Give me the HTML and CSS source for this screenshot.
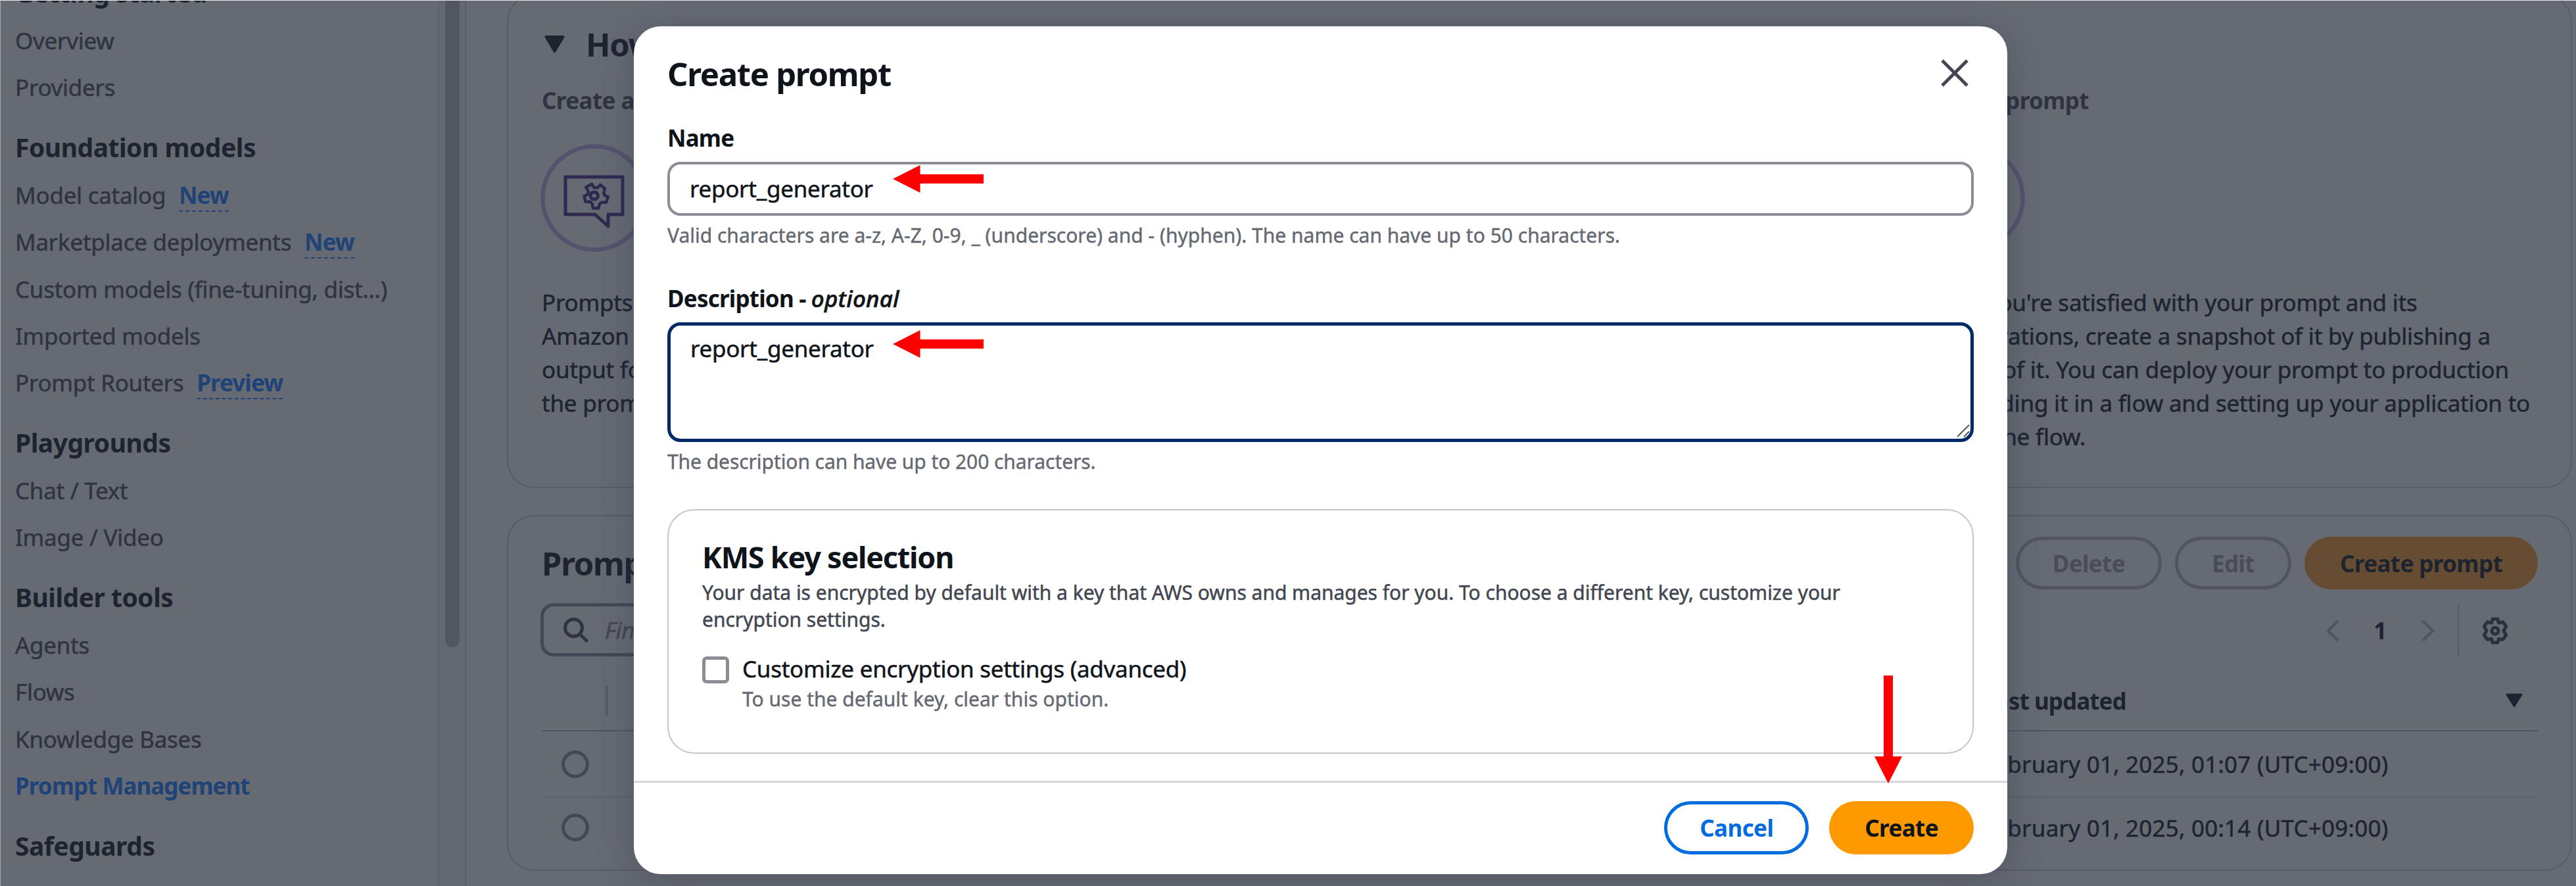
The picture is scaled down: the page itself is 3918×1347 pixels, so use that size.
FILE: index.html
```html
<!DOCTYPE html>
<html lang="en">
<head>
<meta charset="utf-8">
<title>Prompt Management</title>
<link rel="stylesheet" href="styles.css">
</head>
<body>
<div class="app">
  <nav class="sidebar">
    <section class="nav-group">
      <h3>Getting started</h3>
      <ul><li>Overview</li><li>Providers</li></ul>
    </section>
    <section class="nav-group">
      <h3>Foundation models</h3>
      <ul>
        <li>Model catalog <b class="tag">New</b></li>
        <li>Marketplace deployments <b class="tag">New</b></li>
        <li>Custom models (fine-tuning, dist...)</li>
        <li>Imported models</li>
        <li>Prompt Routers <b class="tag">Preview</b></li>
      </ul>
    </section>
    <section class="nav-group">
      <h3>Playgrounds</h3>
      <ul><li>Chat / Text</li><li>Image / Video</li></ul>
    </section>
    <section class="nav-group">
      <h3>Builder tools</h3>
      <ul>
        <li>Agents</li><li>Flows</li><li>Knowledge Bases</li>
        <li class="active">Prompt Management</li>
      </ul>
    </section>
    <section class="nav-group">
      <h3>Safeguards</h3>
    </section>
  </nav>
  <div class="scrollbar"><div class="thumb"></div></div>

  <main class="main">
    <section class="panel how">
      <h2 class="how-title">
        <svg width="31" height="26" viewBox="0 0 31 26"><path d="M2.500 2h26L15.500 24z" fill="#1d2430" stroke="#1d2430" stroke-width="4" stroke-linejoin="round"/></svg>
        How it works
      </h2>
      <div class="steps">
        <article class="step">
          <h4>Create a prompt</h4>
          <svg class="step-icon" width="164" height="164" viewBox="0 0 164 164" fill="none">
            <circle cx="82" cy="82" r="78.500" stroke="#55526e" stroke-width="6.500"/>
            <g stroke="#2f2850" stroke-width="5" stroke-linejoin="round">
              <path d="M38 50h87v57h-22v18l-20-18H38z"/>
              <path stroke-width="4.500" d="M78.200 60.800l3.300 5.400 5 .4 4.500-4.600 7 5.800-1.800 6.500 1.900 4 4.700 2.100-2.800 8.400-6.600-.4-3.600 2.800-1.200 6.400-8.800-.2-.9-6.400-3.200-3.300-7.200.1-2-8.700 5.400-2.400 1-4.600-3.700-6.400z"/>
              <circle cx="81.800" cy="78.500" r="5.600"/>
            </g>
          </svg>
          <p>Prompts<br>Amazon<br>output for<br>the prompt</p>
        </article>
        <article class="step"></article>
        <article class="step">
          <h4>Publish prompt</h4>
          <svg class="step-icon" width="164" height="164" viewBox="0 0 164 164" fill="none">
            <circle cx="82" cy="82" r="78.500" stroke="#55526e" stroke-width="6.500"/>
          </svg>
          <p>When you're satisfied with your prompt and its<br>configurations, create a snapshot of it by publishing a<br>version of it. You can deploy your prompt to production<br>by including it in a flow and setting up your application to<br>invoke the flow.</p>
        </article>
      </div>
    </section>

    <section class="panel prompts">
      <header class="bar">
        <h2>Prompts</h2>
        <div class="actions">
          <span class="btn ghost">Delete</span>
          <span class="btn ghost">Edit</span>
          <span class="btn dim">Create prompt</span>
        </div>
      </header>
      <div class="tools">
        <div class="search">
          <svg width="40" height="40" viewBox="0 0 40 40" fill="none" stroke="#2f3440" stroke-width="5"><circle cx="16.500" cy="16.500" r="13"/><path d="M26 26l11.500 11.500"/></svg>
          <em>Find prompts</em>
        </div>
        <div class="pager">
          <svg width="22" height="34" viewBox="0 0 22 34" fill="none" stroke="#505562" stroke-width="4.500"><path d="M19 2L4 17l15 15"/></svg>
          <b>1</b>
          <svg width="22" height="34" viewBox="0 0 22 34" fill="none" stroke="#505562" stroke-width="4.500"><path d="M3 2l15 15L3 32"/></svg>
          <i class="rule"></i>
          <svg width="42" height="42" viewBox="0 0 42 42" fill="none" stroke="#2b303c" stroke-width="5" stroke-linejoin="round"><path d="M17.200 3h7.600l1.600 6 6.300-1.400 5 6.600-3.700 6.800 3.700 6.600-5 6.600-6.300-1-1.600 5.800h-7.600l-1.600-5.800-6.300 1-5-6.600L8 21l-3.700-6.800 5-6.600L15.600 9z"/><circle cx="21" cy="21" r="5"/></svg>
        </div>
      </div>
      <div class="row head">
        <i class="split"></i>
        <strong>Last updated</strong>
        <svg class="sort" width="28" height="22" viewBox="0 0 28 22"><path d="M3 2h22L14 19.500z" fill="#1d2430" stroke="#1d2430" stroke-width="3" stroke-linejoin="round"/></svg>
      </div>
      <div class="row"><i class="radio"></i><span>February 01, 2025, 01:07 (UTC+09:00)</span></div>
      <div class="row last"><i class="radio"></i><span>February 01, 2025, 00:14 (UTC+09:00)</span></div>
    </section>
  </main>
</div>

<div class="modal">
  <header class="modal-head">
    <h2>Create prompt</h2>
    <svg width="44" height="44" viewBox="0 0 44 44" fill="none" stroke="#424650" stroke-width="5"><path d="M3 3l38 38M41 3L3 41"/></svg>
  </header>
  <div class="modal-body">
    <div class="field">
      <label>Name</label>
      <div class="input">report_generator</div>
      <p class="hint">Valid characters are a-z, A-Z, 0-9, _ (underscore) and - (hyphen). The name can have up to 50 characters.</p>
    </div>
    <div class="field tall">
      <label>Description - <em>optional</em></label>
      <div class="input area">report_generator
        <svg class="grip" width="22" height="22" viewBox="0 0 22 22" fill="none" stroke="#555" stroke-width="2"><path d="M2 19L20 1M12 19l8-8"/></svg>
      </div>
      <p class="hint">The description can have up to 200 characters.</p>
    </div>
    <div class="kms">
      <h3>KMS key selection</h3>
      <p class="kms-desc">Your data is encrypted by default with a key that AWS owns and manages for you. To choose a different key, customize your<br>encryption settings.</p>
      <div class="check">
        <i class="box"></i>
        <div>
          <div>Customize encryption settings (advanced)</div>
          <p class="hint">To use the default key, clear this option.</p>
        </div>
      </div>
    </div>
  </div>
  <footer class="modal-foot">
    <span class="btn cancel">Cancel</span>
    <span class="btn create">Create</span>
  </footer>
</div>

<svg class="arrow arrow-name" width="138" height="42" viewBox="0 0 138 42"><path d="M0 21L41.500 0v14H138v14H41.500v14z" fill="#f00"/></svg>
<svg class="arrow arrow-desc" width="138" height="42" viewBox="0 0 138 42"><path d="M0 21L41.500 0v14H138v14H41.500v14z" fill="#f00"/></svg>
<svg class="arrow arrow-create" width="42" height="164" viewBox="0 0 42 164"><path d="M14 0h14v123h14L21 164 0 123h14z" fill="#f00"/></svg>
</body>
</html>
```
FILE: styles.css
```css
* { box-sizing: border-box; margin: 0; padding: 0; }
html, body { width: 3918px; height: 1347px; overflow: hidden; }
body {
  position: relative;
  background: #666a73;
  color: #1d2430;
  font: 35px/51px "Noto Sans", "Open Sans", sans-serif;
  letter-spacing: -0.27px;
  white-space: nowrap;
  -webkit-text-stroke: 0.5px currentColor;
}
ul { list-style: none; }
svg { display: block; flex: none; }
h2, h3, h4, b, strong { font-weight: 700; }
h2, h3, h4, b, strong, label, .btn, .active { -webkit-text-stroke: 0; }
i { display: block; flex: none; }

/* Page behind the dialog */
.app {
  display: flex;
  height: 1347px;
  border-top: 1px solid #e8e9ea;
  border-left: 1px solid #a3a6ab;
  overflow: hidden;
}
.sidebar {
  flex: none;
  width: 665px;
  padding-left: 22px;
  margin-top: -38px;
  color: #2f3440;
}
.nav-group { margin-bottom: 40px; }
.nav-group h3 {
  font-size: 39px;
  letter-spacing: -0.5px;
  margin-bottom: 22px;
  color: #1d2430;
}
.nav-group li + li { margin-top: 20.2px; }
.tag, .active { color: #1f4377; font-weight: 700; letter-spacing: -0.95px; }
.tag {
  display: inline-block;
  height: 51px;
  margin-left: 11px;
  border-bottom: 2.500px dashed #1f4377;
}
.scrollbar {
  flex: none;
  width: 43px;
  background: #646872;
  border-left: 2px solid #5f636e;
  border-right: 2px solid #575c68;
  padding-left: 9px;
}
.thumb {
  width: 22px;
  height: 983px;
  background: #525661;
  border-radius: 0 0 11px 11px;
}
.main {
  margin-left: 62px;
  width: 3141px;
  display: flex;
  flex-direction: column;
  gap: 41px;
}
.panel {
  flex: none;
  border: 2px solid #575c68;
  border-radius: 41px;
  padding: 0 50px 0 51px;
}
.how { height: 750px; margin-top: -9px; padding-top: 41px; }
h2 { font-size: 49px; line-height: 64px; letter-spacing: -1.3px; }
.how-title { display: flex; align-items: center; gap: 32px; padding-left: 4px; }
.steps {
  display: grid;
  grid-template-columns: 1047px 1047px 1fr;
  margin-top: 28px;
}
.step h4 { font-size: 35px; letter-spacing: -0.6px; color: #2f3440; }
.step-icon { margin: 41px 0 51px -2px; }
.step p { letter-spacing: -0.2px; }

.prompts { height: 541px; padding-top: 31px; }
.bar { display: flex; justify-content: space-between; height: 80px; }
.bar h2 { margin-top: 8px; }
.actions { display: flex; gap: 20px; }
.btn {
  display: flex;
  align-items: center;
  justify-content: center;
  height: 80px;
  padding: 0 49px;
  border: 5px solid transparent;
  border-radius: 41px;
  font-weight: 700;
  letter-spacing: -0.6px;
}
.ghost { padding: 0 51px; color: #484d59; border-color: #505562; }
.dim { background: #664c33; }
.tools { display: flex; justify-content: space-between; margin-top: 21px; }
.search {
  display: flex;
  align-items: center;
  gap: 24px;
  width: 900px;
  height: 81px;
  margin-left: -2px;
  padding-left: 29px;
  border: 5px solid #434854;
  border-radius: 20px;
  color: #434854;
}
.pager { display: flex; align-items: center; height: 83px; padding-right: 44px; }
.pager b { margin: 0 52px 0 51px; }
.pager .rule { width: 2px; height: 80px; background: #575c68; margin: 0 34px; }
.row { display: flex; align-items: center; height: 101px; border-bottom: 2px solid #5d616c; padding-left: 30px; }
.row span { margin-left: 2119px; letter-spacing: 0.23px; }
.head { height: 112px; padding: 20px 22px 0 97px; border-color: #505562; }
.head strong { margin-left: 2091px; letter-spacing: -0.9px; }
.sort { margin-left: auto; }
.split { width: 4px; height: 46px; background: #575c68; }
.last { border: 0; height: 90px; }
.radio { width: 42px; height: 42px; border: 5px solid #434854; border-radius: 50%; }

/* Dialog */
.modal {
  position: absolute;
  left: 964px;
  top: 40px;
  width: 2089px;
  height: 1289px;
  display: flex;
  flex-direction: column;
  background: #fff;
  border-radius: 41px;
  color: #0f141a;
  box-shadow: 0 10px 51px 5px rgba(40, 46, 66, 0.28);
}
.modal-head {
  display: flex;
  justify-content: space-between;
  padding: 40px 58px 0 51px;
}
.modal-head svg { margin-top: 9px; }
.modal-body { flex: 1; padding: 40px 51px 0 51px; }
.field { display: flex; flex-direction: column; height: 244px; }
.field label { font-weight: 700; letter-spacing: -0.8px; margin-bottom: 11px; }
.field label em { font-weight: 500; letter-spacing: 0.2px; -webkit-text-stroke: 0.6px currentColor; }
.input {
  position: relative;
  height: 82px;
  padding: 11px 30px;
  border: 4.500px solid #8c8c94;
  border-radius: 20px;
}
.area { height: 182px; border: 5px solid #002b66; padding-top: 9px; }
.grip { position: absolute; right: 0; bottom: 0; }
.hint { font-size: 30px; line-height: 41px; letter-spacing: 0; color: #656871; -webkit-text-stroke: 0.4px currentColor; }
.field .hint { margin-top: 9px; }
.tall { height: 346px; }
.tall .hint { letter-spacing: -0.07px; }
.kms {
  height: 372px;
  border: 2px solid #c6c6cd;
  border-radius: 41px;
  padding: 43px 51px 0;
}
.kms h3 { font-size: 45px; line-height: 56px; letter-spacing: -1.25px; }
.kms-desc { margin-top: 5px; font-size: 30px; line-height: 41.400px; letter-spacing: -0.02px; color: #424650; }
.check { display: flex; gap: 20px; margin-top: 28px; }
.box { width: 41px; height: 41px; margin-top: 7px; border: 5px solid #8c8c94; border-radius: 7px; }
.modal-foot {
  display: flex;
  justify-content: flex-end;
  gap: 31px;
  height: 142px;
  padding: 28px 51px 0 0;
  border-top: 3px solid #d5d5da;
}
.modal-foot .btn { height: 81px; }
.cancel { color: #006ce0; border-color: #006ce0; }
.create { background: #ff9900; }

/* Callout arrows */
.arrow { position: absolute; }
.arrow-name { left: 1358px; top: 251px; }
.arrow-desc { left: 1358px; top: 502px; }
.arrow-create { left: 2851px; top: 1027px; }
```
